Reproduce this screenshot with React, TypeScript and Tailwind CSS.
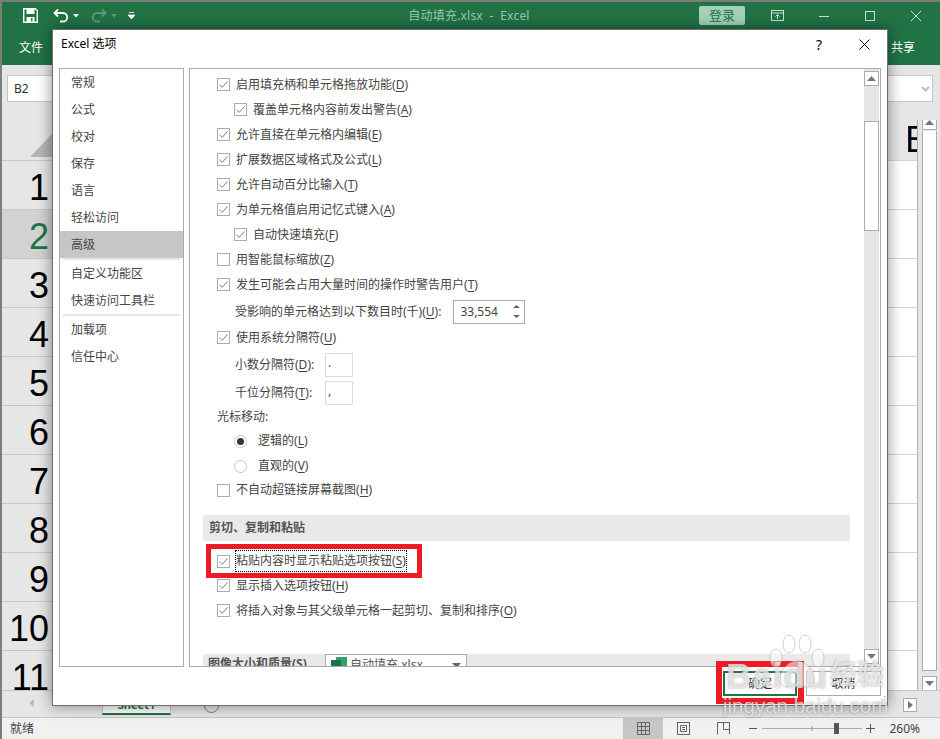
import React from "react";

const FONT = '"Noto Sans", "Noto Sans CJK SC", sans-serif';

function Check({ on = true }: { on?: boolean }) {
  return (
    <span className="w-[13px] h-[13px] border border-[#ababab] bg-white shrink-0 flex items-center justify-center">
      {on && (
        <svg width="11" height="11" viewBox="0 0 11 11" fill="none">
          <path d="M1.5 5.8 L4.2 8.4 L9.5 2.4" stroke="#7a7a7a" strokeWidth="1" />
        </svg>
      )}
    </span>
  );
}

function U({ c }: { c: string }) {
  return <span className="underline underline-offset-2">{c}</span>;
}

function CheckRow({
  text,
  k,
  on = true,
  indent = false,
  h = "h-[25px]",
  focus = false,
}: {
  text: string;
  k: string;
  on?: boolean;
  indent?: boolean;
  h?: string;
  focus?: boolean;
}) {
  return (
    <div className={`${h} shrink-0 flex items-center gap-[6px] ${indent ? "pl-[31px]" : "pl-[14px]"}`}>
      <Check on={on} />
      <span className={`whitespace-nowrap ${focus ? "outline-1 outline-dotted outline-black leading-[20px]" : ""}`}>
        {text}(<U c={k} />)
      </span>
    </div>
  );
}

function Radio({ on, text, k }: { on: boolean; text: string; k: string }) {
  return (
    <div className={`flex items-center gap-[11px] pl-[31px] shrink-0 ${on ? "h-[26px]" : "h-[24px]"}`}>
      <span className="w-[13px] h-[13px] rounded-full border border-[#c4c4c4] flex items-center justify-center shrink-0">
        {on && <span className="w-[7px] h-[7px] rounded-full bg-[#333]" />}
      </span>
      <span>
        {text}(<U c={k} />)
      </span>
    </div>
  );
}

function ScrollBtn({ down = false, cls = "" }: { down?: boolean; cls?: string }) {
  return (
    <div className={`w-[15px] h-[15px] border border-[#ababab] bg-white flex items-center justify-center shrink-0 ${cls}`}>
      <svg width="9" height="5" viewBox="0 0 9 5">
        <path d={down ? "M0 0 H9 L4.5 5 Z" : "M0 5 H9 L4.5 0 Z"} fill="#777" />
      </svg>
    </div>
  );
}

function TitleBar() {
  return (
    <div className="h-[65px] bg-[#217346] border-t-2 border-[#7d7d7d] relative shrink-0 flex flex-col">
      <div className="h-[27px] flex items-center text-white">
        <svg className="ml-[23px]" width="15" height="15" viewBox="0 0 15 15" fill="none">
          <path d="M0.7 0.7 H12.5 L14.3 2.5 V14.3 H0.7 Z" stroke="#fff" strokeWidth="1.4" />
          <rect x="3.5" y="1" width="8" height="5" fill="#fff" />
          <rect x="3.5" y="9" width="8" height="5" fill="#fff" />
          <rect x="8" y="10" width="1.5" height="3.4" fill="#217346" />
        </svg>
        <svg className="ml-[15px]" width="16" height="16" viewBox="0 0 16 16" fill="none">
          <path d="M5 1.5 L1.5 5 L5 8.5 M2 5 H10 A4 4 0 0 1 10 13.5 H7" stroke="#fff" strokeWidth="1.8" />
        </svg>
        <svg className="ml-[4px]" width="6" height="4" viewBox="0 0 6 4"><path d="M0 0 H6 L3 3.5 Z" fill="#fff" /></svg>
        <svg className="ml-[12px]" width="16" height="16" viewBox="0 0 16 16" fill="none">
          <path d="M11 1.5 L14.5 5 L11 8.5 M14 5 H6 A4 4 0 0 0 6 13.5 H9" stroke="#5d9c7b" strokeWidth="1.8" />
        </svg>
        <svg className="ml-[4px]" width="6" height="4" viewBox="0 0 6 4"><path d="M0 0 H6 L3 3.5 Z" fill="#5d9c7b" /></svg>
        <svg className="ml-[11px]" width="7" height="8" viewBox="0 0 7 8"><path d="M1 0.5 H6 M0 3 H7 L3.5 7 Z" stroke="#fff" strokeWidth="0.8" fill="#fff" /></svg>
        <span className="ml-[267px] w-[134px] text-center text-[12px] text-[#9cc7b0] whitespace-nowrap tracking-[0.2px]">自动填充.xlsx&nbsp; -&nbsp; Excel</span>
        <span className="ml-[163px] w-[46px] h-[19px] bg-[#a5d1b9] rounded-[2px] text-[#217346] text-[13px] leading-[19px] text-center">登录</span>
        <svg className="ml-[26px]" width="13" height="11" viewBox="0 0 13 11" fill="none" stroke="#c9e0d3">
          <rect x="0.5" y="0.5" width="12" height="10" />
          <path d="M0.5 3 H12.5 M6.5 9 V5 M4.5 6.5 L6.5 4.5 L8.5 6.5" />
        </svg>
        <svg className="ml-[35px]" width="10" height="10" viewBox="0 0 10 10" stroke="#c9e0d3"><path d="M0 5.5 H10" /></svg>
        <svg className="ml-[36px]" width="10" height="10" viewBox="0 0 10 10" fill="none" stroke="#c9e0d3"><rect x="0.5" y="0.5" width="9" height="9" /></svg>
        <svg className="ml-[36px]" width="10" height="10" viewBox="0 0 10 10" stroke="#c9e0d3"><path d="M0 0 L10 10 M10 0 L0 10" /></svg>
      </div>
      <div className="flex-1 flex items-center justify-between text-white text-[12px] pl-[19px] pr-[25px] pt-[1px]">
        <span>文件</span>
        <span>共享</span>
      </div>
    </div>
  );
}

function FormulaBar() {
  return (
    <div className="h-[55px] bg-[#e6e6e6] shrink-0 flex items-start justify-between pl-[7px] pr-[7px] pt-[10px]">
      <div className="w-[60px] h-[27px] bg-white border border-[#c6c6c6] pl-[6px] text-[12px] leading-[25px] text-[#333]">B2</div>
      <div className="w-[60px] h-[27px] bg-white border border-[#c6c6c6] flex items-center justify-end pr-[2px]">
        <svg width="9" height="6" viewBox="0 0 9 6" fill="none"><path d="M1 1 L4.5 4.5 L8 1" stroke="#bbb" strokeWidth="2" /></svg>
      </div>
    </div>
  );
}

const ROWS = ["1", "2", "3", "4", "5", "6", "7", "8", "9", "10", "11"];

function Sheet() {
  return (
    <div className="flex-1 flex min-h-0 overflow-hidden bg-[#e6e6e6]">
      <div className="w-[52px] shrink-0 flex flex-col">
        <div className="h-[41px] shrink-0 flex items-end justify-end pb-[3px] border-b border-[#c6c6c6]">
          <svg width="22" height="23" viewBox="0 0 22 23"><path d="M22 0 V23 H0 Z" fill="#b4b4b4" /></svg>
        </div>
        {ROWS.map((r) => (
          <div
            key={r}
            className={`h-[49px] shrink-0 border-b border-[#c6c6c6] flex items-center justify-end pr-[3px] pt-[6px] text-[36px] leading-none ${
              r === "2" ? "bg-[#d2d2d2] text-[#217346]" : "text-black"
            }`}
            style={{ fontFamily: '"Liberation Sans", sans-serif' }}
          >
            {r}
          </div>
        ))}
      </div>
      <div className="flex-1 flex flex-col border-r border-[#b0b0b0]">
        <div className="h-[40px] shrink-0 flex items-center justify-end text-[36px] leading-none text-black overflow-hidden" style={{ fontFamily: '"Liberation Sans", sans-serif' }}>
          <span className="w-[9px] overflow-hidden -indent-[3px]">E</span>
        </div>
        {ROWS.map((r) => (
          <div key={r} className="h-[49px] shrink-0 bg-white border-t border-[#d4d4d4]" />
        ))}
      </div>
      <div className="w-[22px] shrink-0 pl-[4px] pr-[3px] flex flex-col -mt-[5px] pb-0">
        <ScrollBtn />
        <div className="h-[540px] bg-white border border-[#ababab] border-t-0 shrink-0 mt-[1px]" />
        <div className="h-[5px] shrink-0" />
        <ScrollBtn down />
      </div>
    </div>
  );
}

function TabBar() {
  return (
    <div className="h-[27px] bg-[#e6e6e6] border-t border-[#c6c6c6] shrink-0 flex items-start">
      <svg className="ml-[29px] mt-[8px]" width="5" height="8" viewBox="0 0 5 8"><path d="M5 0 V8 L0 4 Z" fill="#bbb" /></svg>
      <div className="ml-[68px] w-[69px] h-[24px] bg-white border-x border-[#c6c6c6] border-b-2 border-b-[#217346] flex items-end justify-center text-[11px] text-[#217346] font-bold">Sheet1</div>
      <span className="ml-[33px] mt-[7px] w-[15px] h-[15px] rounded-full border border-[#777]" />
      <div className="flex-1" />
      <div className="mr-[23px] mt-[7px] w-[14px] h-[14px] bg-white border border-[#ababab] flex items-center justify-center">
        <svg width="5" height="8" viewBox="0 0 5 8"><path d="M0 0 V8 L5 4 Z" fill="#777" /></svg>
      </div>
    </div>
  );
}

function StatusBar() {
  return (
    <div className="h-[22px] bg-[#f1f1f1] border-t border-[#c6c6c6] shrink-0 flex items-center text-[12px] text-[#444]">
      <span className="ml-[10px]">就绪</span>
      <div className="flex-1" />
      <div className="w-[40px] h-full bg-[#c6c6c6] flex items-center justify-center">
        <svg width="13" height="13" viewBox="0 0 13 13" fill="none" stroke="#666">
          <path d="M0.5 0.5 H12.5 V12.5 H0.5 Z M4.5 0.5 V12.5 M8.5 0.5 V12.5 M0.5 4.5 H12.5 M0.5 8.5 H12.5" />
        </svg>
      </div>
      <div className="w-[40px] flex items-center justify-center">
        <svg width="13" height="13" viewBox="0 0 13 13" fill="none" stroke="#666">
          <rect x="0.5" y="0.5" width="12" height="12" />
          <path d="M3.5 3.5 H9.5 V9.5 H3.5 Z M5 5.5 H8 M5 7.5 H8" />
        </svg>
      </div>
      <div className="w-[40px] flex items-center justify-center">
        <svg width="13" height="13" viewBox="0 0 13 13" fill="none" stroke="#666">
          <path d="M0.5 12.5 V0.5 H12.5 V12.5 M6.5 0.5 V7.5 H12.5" />
        </svg>
      </div>
      <svg className="ml-[6px] shrink-0" width="113" height="13" viewBox="0 0 113 13" fill="none">
        <path d="M0 6.5 H8" stroke="#555" />
        <path d="M13 6.5 H113" stroke="#aaa" />
        <path d="M63 4 V9" stroke="#999" />
      </svg>
      <span className="w-[5px] h-[11px] bg-[#555] -ml-[28px] shrink-0" />
      <svg className="ml-[27px] shrink-0" width="9" height="9" viewBox="0 0 9 9" stroke="#555"><path d="M0 4.5 H9 M4.5 0 V9" /></svg>
      <span className="ml-[14px] mr-[20px] text-[12px]">260%</span>
    </div>
  );
}

function Nav() {
  const item = (t: string, active = false) => (
    <div key={t} className={`h-[27px] pl-[11px] flex items-center ${active ? "bg-[#c6c6c6]" : ""}`}>
      {t}
    </div>
  );
  return (
    <div className="w-[125px] h-full border border-[#ababab] shrink-0">
      {["常规", "公式", "校对", "保存", "语言", "轻松访问"].map((t) => item(t))}
      {item("高级", true)}
      <div className="h-[2px] mx-[3px] bg-[#e6e6e6]" />
      {item("自定义功能区")}
      {item("快速访问工具栏")}
      <div className="h-[2px] mx-[3px] bg-[#e6e6e6]" />
      {item("加载项")}
      {item("信任中心")}
    </div>
  );
}

function Options() {
  return (
    <div className="flex-1 h-full border border-[#ababab] flex overflow-hidden ml-[5px] mr-[6px] min-w-0">
      <div className="flex-1 overflow-hidden pl-[13px] pr-[14px] pt-[3px] min-w-0 flex flex-col">
        <CheckRow text="启用填充柄和单元格拖放功能" k="D" />
        <CheckRow text="覆盖单元格内容前发出警告" k="A" indent />
        <CheckRow text="允许直接在单元格内编辑" k="E" />
        <CheckRow text="扩展数据区域格式及公式" k="L" />
        <CheckRow text="允许自动百分比输入" k="T" />
        <CheckRow text="为单元格值启用记忆式键入" k="A" />
        <CheckRow text="自动快速填充" k="F" indent />
        <CheckRow text="用智能鼠标缩放" k="Z" on={false} />
        <CheckRow text="发生可能会占用大量时间的操作时警告用户" k="T" />
        <div className="h-[29px] flex items-center pl-[32px] whitespace-nowrap shrink-0">
          受影响的单元格达到以下数目时(千)(<U c="U" />):
          <div className="ml-[12px] w-[72px] h-[24px] border border-[#ababab] flex items-center justify-between pl-[6px] pr-[4px]">
            <span>33,554</span>
            <span className="flex flex-col gap-[7px]">
              <svg width="7" height="3" viewBox="0 0 7 3"><path d="M0 3 H7 L3.5 0 Z" fill="#666" /></svg>
              <svg width="7" height="3" viewBox="0 0 7 3"><path d="M0 0 H7 L3.5 3 Z" fill="#666" /></svg>
            </span>
          </div>
        </div>
        <CheckRow text="使用系统分隔符" k="U" h="h-[23px]" />
        <div className="h-[31px] flex items-center pl-[32px] shrink-0">
          <span className="w-[90px]">小数分隔符(<U c="D" />):</span>
          <div className="w-[28px] h-[24px] border border-[#dcdcdc] pl-[2px]">.</div>
        </div>
        <div className="h-[26px] flex items-center pl-[32px] shrink-0">
          <span className="w-[90px]">千位分隔符(<U c="T" />):</span>
          <div className="w-[28px] h-[24px] border border-[#dcdcdc] pl-[2px]">,</div>
        </div>
        <div className="h-[22px] flex items-center pl-[14px] shrink-0">光标移动:</div>
        <Radio on text="逻辑的" k="L" />
        <Radio on={false} text="直观的" k="V" />
        <CheckRow text="不自动超链接屏幕截图" k="H" on={false} h="h-[24px]" />
        <div className="mt-[13px] h-[26px] shrink-0 bg-[#e9e9e9] pl-[6px] flex items-center font-bold text-[#555]">剪切、复制和粘贴</div>
        <div className="mt-[8px] shrink-0">
          <CheckRow text="粘贴内容时显示粘贴选项按钮" k="S" h="h-[24px]" focus />
        </div>
        <CheckRow text="显示插入选项按钮" k="H" />
        <CheckRow text="将插入对象与其父级单元格一起剪切、复制和排序" k="O" />
        <div className="mt-[31px] h-[30px] shrink-0 bg-[#e9e9e9] flex items-start font-bold text-[#555]">
          <span className="ml-[5px] mt-[1px] w-[117px]">图像大小和质量(<U c="S" />)</span>
          <div className="w-[142px] h-[22px] bg-white border border-[#ababab] flex items-center pl-[5px] pr-[5px] font-normal">
            <svg width="16" height="16" viewBox="0 0 16 16" className="shrink-0">
              <rect x="5" y="0" width="11" height="16" fill="#33a06a" />
              <rect x="0" y="3" width="10" height="10" fill="#1c7346" />
            </svg>
            <span className="ml-[3px] whitespace-nowrap flex-1">自动填充.xlsx</span>
            <svg width="9" height="5" viewBox="0 0 9 5"><path d="M0 0 H9 L4.5 5 Z" fill="#666" /></svg>
          </div>
        </div>
      </div>
      <div className="w-[15px] mr-[1px] bg-[#e6e6e6] shrink-0 flex flex-col pt-[2px] pb-[2px]">
        <ScrollBtn />
        <div className="mt-[35px] h-[110px] shrink-0 bg-white border border-[#ababab]" />
        <div className="flex-1" />
        <ScrollBtn down />
      </div>
    </div>
  );
}

function Dialog() {
  return (
    <div className="absolute left-[52px] top-[29px] w-[836px] h-[677px] bg-white border border-[#6e6e6e] shadow-[0_0_14px_rgba(0,0,0,0.45)] flex flex-col text-[12px] text-[#444]">
      <div className="h-[38px] shrink-0 flex items-center pl-[8px] pb-[10px] text-black">
        <span className="text-[12px]">Excel 选项</span>
        <div className="flex-1" />
        <span className="text-[14px] mr-[37px]">?</span>
        <svg className="mr-[17px]" width="11" height="11" viewBox="0 0 11 11" stroke="#000"><path d="M0.5 0.5 L10.5 10.5 M10.5 0.5 L0.5 10.5" /></svg>
      </div>
      <div className="h-[599px] shrink-0 flex pl-[6px]">
        <Nav />
        <Options />
      </div>
      <div className="flex-1 flex items-start justify-end pt-[4px] pr-[6px] gap-[9px] relative">
        <div className="w-[74px] h-[25px] border-2 border-[#217346] flex items-center justify-center text-[#333]">确定</div>
        <div className="w-[75px] h-[25px] border border-[#ababab] flex items-center justify-center text-[#333]">取消</div>
        <svg className="absolute right-[1px] bottom-[1px]" width="8" height="8" viewBox="0 0 8 8" fill="#b5b5b5">
          <rect x="6" y="0" width="1.5" height="1.5" />
          <rect x="3" y="3" width="1.5" height="1.5" />
          <rect x="6" y="3" width="1.5" height="1.5" />
          <rect x="0" y="6" width="1.5" height="1.5" />
          <rect x="3" y="6" width="1.5" height="1.5" />
          <rect x="6" y="6" width="1.5" height="1.5" />
        </svg>
      </div>
    </div>
  );
}

function Watermark() {
  return (
    <div className="absolute left-[722px] top-[633px] w-[170px] h-[90px] pointer-events-none text-white/70" style={{ fontFamily: '"Liberation Sans", sans-serif' }}>
      <svg className="absolute left-[44px] top-[0px]" width="62" height="58" viewBox="0 0 62 58" fill="rgba(255,255,255,0.55)" stroke="rgba(170,170,170,0.55)">
        <ellipse cx="10" cy="25" rx="6" ry="9" />
        <ellipse cx="23" cy="11" rx="6" ry="9" />
        <ellipse cx="39" cy="11" rx="6" ry="9" />
        <ellipse cx="52" cy="25" rx="6" ry="9" />
        <path d="M31 28 C41 28 52 42 47 51 C42 57 36 52 31 52 C26 52 20 57 15 51 C10 42 21 28 31 28 Z" />
      </svg>
      <span className="absolute left-[4px] top-[25px] text-[35px] leading-none font-bold tracking-[1px] [text-shadow:0_0_2px_rgba(90,90,90,0.6)]">Baidu</span>
      <span className="absolute left-[108px] top-[26px] text-[27px] leading-none font-bold whitespace-nowrap [text-shadow:0_0_2px_rgba(90,90,90,0.6)]" style={{ fontFamily: '"Noto Sans CJK SC", sans-serif' }}>经验</span>
      <span className="absolute left-[1px] top-[63px] text-[20.5px] leading-none whitespace-nowrap [text-shadow:0_0_2px_rgba(90,90,90,0.7)]">jingyan.baidu.com</span>
    </div>
  );
}

export default function App() {
  return (
    <div className="relative w-[940px] h-[739px] overflow-hidden flex flex-col bg-[#e6e6e6]" style={{ fontFamily: FONT }}>
      <TitleBar />
      <FormulaBar />
      <Sheet />
      <TabBar />
      <StatusBar />
      <Dialog />
      <div className="absolute left-0 top-0 w-[2px] h-full bg-[#7d7d7d]" />
      <div className="absolute left-[206px] top-[544px] w-[216px] h-[34px] border-[5px] border-[#ed1c24] pointer-events-none" />
      <div className="absolute left-[716px] top-[661px] w-[88px] h-[43px] border-[6px] border-[#ed1c24] pointer-events-none" />
      <Watermark />
    </div>
  );
}
